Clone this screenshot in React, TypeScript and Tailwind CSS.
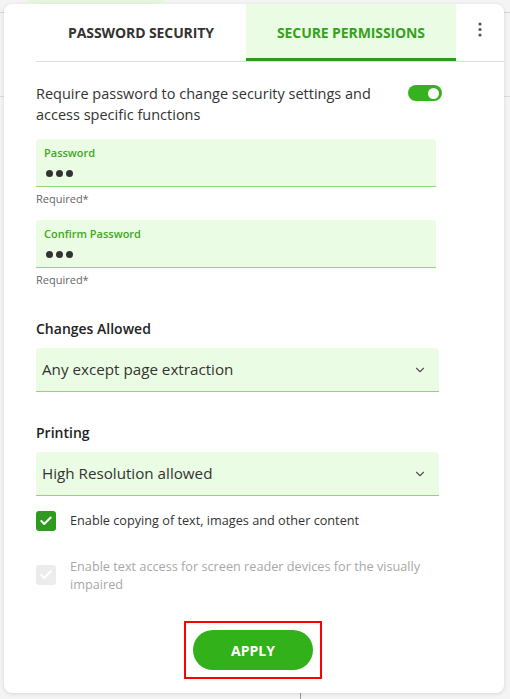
import { ChevronDown, Check } from 'lucide-react';

const fieldCls = 'w-[400px] h-[48px] bg-[#ebfce4] rounded-t-[4px] border-b border-[#93d27f] px-[8px] pt-[7px]';

function PasswordField({ label }: { label: string }) {
    return (
        <div>
            <div className={fieldCls}>
                <div className="text-[11px] leading-[14px] font-semibold text-[#3ea821]">{label}</div>
                <div className="flex gap-[3px] mt-[10px] pl-[2px]">
                    <span className="w-[7px] h-[7px] rounded-full bg-[#333]" />
                    <span className="w-[7px] h-[7px] rounded-full bg-[#333]" />
                    <span className="w-[7px] h-[7px] rounded-full bg-[#333]" />
                </div>
            </div>
            <div className="text-[11px] leading-[14px] text-[#666] mt-[5px]">Required*</div>
        </div>
    );
}

function SelectField({ label, value }: { label: string; value: string }) {
    return (
        <div>
            <div className="text-[14px] leading-[18px] font-semibold text-[#222]">{label}</div>
            <div className="mt-[10px] w-[403px] h-[44px] bg-[#ebfce4] rounded-t-[4px] border-b border-[#93d27f] flex items-center justify-between pl-[6px] pr-[12px]">
                <span className="text-[15.2px] text-[#333]">{value}</span>
                <ChevronDown size={14} strokeWidth={2} className="text-[#555]" />
            </div>
        </div>
    );
}

export default function App() {
    return (
        <div className="relative h-[699px] overflow-hidden bg-[#f4f4f4] p-[4px] font-['Open_Sans',sans-serif]">
            {/* page behind the dialog */}
            <div className="absolute left-[15px] -top-[20px] w-[162px] h-[24px] rounded-b-full bg-[#e6f6dc]" />
            <div className="absolute left-0 top-[12px] w-full h-px bg-[#d4d4d4]" />
            <div className="absolute left-0 top-[96px] w-full h-px bg-[#dcdcdc]" />
            <div className="absolute left-[300px] top-[690px] w-px h-[10px] bg-[#999]" />

            <div className="relative w-[500px] h-[689px] bg-white rounded-[8px] shadow-[0_1px_4px_rgba(0,0,0,0.12)]">
                <div className="ml-[32px] flex border-b border-[#dedede]">
                    <div className="w-[210px] h-[57px] flex items-center justify-center text-[14px] font-bold text-[#333] tracking-[-0.1px]">
                        PASSWORD SECURITY
                    </div>
                    <div className="w-[210px] h-[57px] flex items-center justify-center text-[14px] font-bold text-[#36a11f] bg-[#ebfce4] border-b-[3px] border-[#2f9a1f] pt-[3px] tracking-[-0.1px]">
                        SECURE PERMISSIONS
                    </div>
                    <div className="flex-1 flex justify-center pt-[18px]">
                        <svg width="4" height="16" viewBox="0 0 4 16">
                            <circle cx="2" cy="2" r="1.6" fill="#555" />
                            <circle cx="2" cy="7.5" r="1.6" fill="#555" />
                            <circle cx="2" cy="13" r="1.6" fill="#555" />
                        </svg>
                    </div>
                </div>

                <div className="px-[32px] pt-[21px]">
                    <div className="flex items-start w-[406px]">
                        <div className="flex-1 text-[14.5px] leading-[21px] text-[#333] pr-[16px]">
                            Require password to change security settings and access specific functions
                        </div>
                        <div className="w-[34px] h-[16px] mt-[2px] rounded-full bg-[#36b21e] flex items-center justify-end pr-[3px]">
                            <span className="w-[11px] h-[11px] rounded-full bg-white" />
                        </div>
                    </div>

                    <div className="mt-[14px] flex flex-col gap-[14px]">
                        <PasswordField label="Password" />
                        <PasswordField label="Confirm Password" />
                    </div>

                    <div className="mt-[33px] flex flex-col gap-[32px]">
                        <SelectField label="Changes Allowed" value="Any except page extraction" />
                        <SelectField label="Printing" value="High Resolution allowed" />
                    </div>

                    <div className="mt-[15px] flex items-center gap-[14px]">
                        <span className="w-[20px] h-[20px] rounded-[3px] bg-[#2f9a1f] flex items-center justify-center">
                            <Check size={14} strokeWidth={3.5} className="text-white" />
                        </span>
                        <span className="text-[12.7px] text-[#333]">Enable copying of text, images and other content</span>
                    </div>

                    <div className="mt-[26px] flex items-center gap-[14px]">
                        <span className="w-[20px] h-[20px] rounded-[3px] bg-[#ececec] flex items-center justify-center shrink-0">
                            <Check size={14} strokeWidth={3.5} className="text-white" />
                        </span>
                        <span className="text-[12.7px] leading-[18px] text-[#a8a8a8] w-[360px]">
                            Enable text access for screen reader devices for the visually impaired
                        </span>
                    </div>

                    <div className="mt-[28px] flex justify-center">
                        <div className="ml-[-2px] border-2 border-[#ff0000] px-[7px] py-[7px]">
                            <button className="w-[120px] h-[40px] rounded-full bg-[#33b11a] text-white text-[14px] font-bold">
                                APPLY
                            </button>
                        </div>
                    </div>
                </div>
            </div>
        </div>
    );
}
